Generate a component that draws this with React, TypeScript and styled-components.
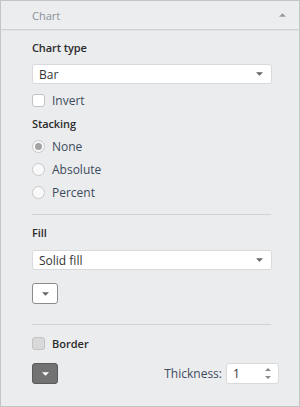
import styled, { createGlobalStyle } from "styled-components";

const GlobalStyle = createGlobalStyle`
  html, body {
    margin: 0;
    padding: 0;
    background: #ebecee;
  }
  body {
    font-family: "Open Sans", "Noto Sans", sans-serif;
  }
`;

const Caret = ({ color = "#666", up = false, w = 7 }: { color?: string; up?: boolean; w?: number }) => (
  <svg width={w} height={Math.ceil(w / 2)} viewBox="0 0 7 3.5" style={{ display: "block" }}>
    <path d={up ? "M0 3.5 L3.5 0 L7 3.5 Z" : "M0 0 L7 0 L3.5 3.5 Z"} fill={color} />
  </svg>
);

const Chart = () => {
  return (
    <Panel>
      <GlobalStyle />
      <Header>
        <span>Chart</span>
        <Caret color="#9a9a9a" up />
      </Header>
      <Body>
        <Label $top={9} $bottom={7}>Chart type</Label>
        <Select>
          <span>Bar</span>
          <Caret />
        </Select>
        <CheckRow $top={5}>
          <Box />
          <Option>Invert</Option>
        </CheckRow>
        <Label $top={3} $bottom={2}>Stacking</Label>
        <CheckRow>
          <Radio $checked />
          <Option>None</Option>
        </CheckRow>
        <CheckRow>
          <Radio />
          <Option>Absolute</Option>
        </CheckRow>
        <CheckRow>
          <Radio />
          <Option>Percent</Option>
        </CheckRow>
        <Divider $top={10} />
        <Label $top={9} $bottom={8}>Fill</Label>
        <Select>
          <span>Solid fill</span>
          <Caret />
        </Select>
        <ColorButton $top={13}>
          <Caret />
        </ColorButton>
        <Divider $top={20} />
        <CheckRow $top={7}>
          <Box $grey />
          <Option $bold>Border</Option>
        </CheckRow>
        <BottomRow>
          <ColorButton $dark>
            <Caret color="#fff" />
          </ColorButton>
          <Thickness>
            <span>Thickness:</span>
            <NumberBox>
              <span>1</span>
              <Spinner>
                <Caret color="#888" up w={6} />
                <Caret color="#888" w={6} />
              </Spinner>
            </NumberBox>
          </Thickness>
        </BottomRow>
      </Body>
    </Panel>
  );
};

const Panel = styled.div`
  width: 300px;
  height: 407px;
  box-sizing: border-box;
  border: 1px solid #c3c4c6;
  background: #ebecee;
  overflow: hidden;
`;

const Header = styled.div`
  height: 28px;
  display: flex;
  align-items: center;
  justify-content: space-between;
  padding: 0 13px 0 31px;
  font-size: 11px;
  color: #8a9097;
  background: #ecedef;
  border-bottom: 1px solid #d2d3d5;
  box-shadow: 0 1px 1px rgba(0, 0, 0, 0.04);
`;

const Body = styled.div`
  padding: 0 27px 0 31px;
  display: flex;
  flex-direction: column;
`;

const Label = styled.div<{ $top: number; $bottom: number }>`
  font-size: 11px;
  font-weight: 600;
  letter-spacing: -0.1px;
  color: #2b2b2b;
  line-height: 18px;
  margin-top: ${(p) => p.$top}px;
  margin-bottom: ${(p) => p.$bottom}px;
`;

const Select = styled.div`
  height: 20px;
  box-sizing: border-box;
  background: #fff;
  border: 1px solid #d8d9db;
  border-radius: 3px;
  display: flex;
  align-items: center;
  justify-content: space-between;
  padding: 0 8px 0 6px;
  font-size: 12px;
  color: #333;
`;

const CheckRow = styled.div<{ $top?: number }>`
  display: flex;
  align-items: center;
  gap: 7px;
  height: 23px;
  margin-top: ${(p) => p.$top ?? 0}px;
`;

const Box = styled.div<{ $grey?: boolean }>`
  width: 13px;
  height: 13px;
  box-sizing: border-box;
  border: 1px solid #c2c3c5;
  border-radius: 3px;
  background: ${(p) => (p.$grey ? "#d9d9d9" : "#fff")};
`;

const Radio = styled.div<{ $checked?: boolean }>`
  width: 13px;
  height: 13px;
  box-sizing: border-box;
  border: 1px solid #c7c8ca;
  border-radius: 50%;
  background: #f9f9f9;
  display: flex;
  align-items: center;
  justify-content: center;
  &::after {
    content: "";
    width: 7px;
    height: 7px;
    border-radius: 50%;
    background: ${(p) => (p.$checked ? "#a3a3a3" : "transparent")};
  }
`;

const Option = styled.span<{ $bold?: boolean }>`
  font-size: ${(p) => (p.$bold ? 11 : 12)}px;
  color: ${(p) => (p.$bold ? "#2b2b2b" : "#3d4b5c")};
  font-weight: ${(p) => (p.$bold ? 600 : 400)};
`;

const Divider = styled.div<{ $top: number }>`
  height: 1px;
  background: #d1d2d4;
  margin: ${(p) => p.$top}px 1px 0 0;
`;

const ColorButton = styled.div<{ $dark?: boolean; $top?: number }>`
  width: 26px;
  height: 21px;
  box-sizing: border-box;
  margin-top: ${(p) => p.$top ?? 0}px;
  border: 1px solid ${(p) => (p.$dark ? "#5a5a5a" : "#8c8c8c")};
  border-radius: 3px;
  background: ${(p) => (p.$dark ? "#727272" : "#fff")};
  display: flex;
  align-items: center;
  justify-content: center;
`;

const BottomRow = styled.div`
  display: flex;
  align-items: center;
  justify-content: space-between;
  margin: 8px -7px 0 0;
`;

const Thickness = styled.div`
  display: flex;
  align-items: center;
  gap: 4px;
  font-size: 12px;
  color: #3d4b5c;
`;

const NumberBox = styled.div`
  width: 53px;
  height: 21px;
  box-sizing: border-box;
  background: #fff;
  border: 1px solid #d8d9db;
  border-radius: 3px;
  display: flex;
  align-items: center;
  justify-content: space-between;
  padding: 0 7px 0 6px;
  color: #333;
`;

const Spinner = styled.div`
  display: flex;
  flex-direction: column;
  gap: 5px;
`;

export default function App() {
  return <Chart />;
}
